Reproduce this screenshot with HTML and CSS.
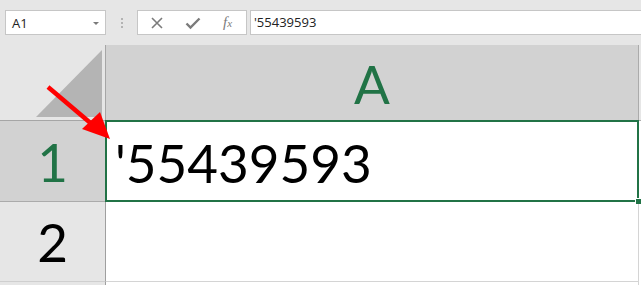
FILE: index.html
```html
<!DOCTYPE html>
<html>
<head>
	<meta charset="utf-8">
	<title>Excel apostrophe</title>
	<link rel="stylesheet" href="styles.css">
</head>
<body>

	<div class="topbar">
		<div class="namebox">
			<span>A1</span>
			<span class="caret"></span>
		</div>
		<div class="grip"><i></i><i></i><i></i></div>
		<div class="fxbtns">
			<svg class="ico" width="14" height="14" viewBox="0 0 14 14">
				<path d="M2 2 L12 12 M12 2 L2 12" stroke="#7b7b7b" stroke-width="1.6" fill="none"/>
			</svg>
			<svg class="ico" width="16" height="14" viewBox="0 0 16 14">
				<path d="M1.5 7.5 L5.5 11.5 L14.5 2.5" stroke="#7b7b7b" stroke-width="2.4" fill="none"/>
			</svg>
			<span class="fx">f<small>x</small></span>
		</div>
		<div class="formula">'55439593</div>
	</div>

	<div class="sheet">
		<div class="corner">
			<svg width="105" height="75" viewBox="0 0 105 75">
				<polygon points="102,5 102,72 36,72" fill="#b4b4b4"/>
			</svg>
		</div>
		<div class="colhead">A</div>
		<div class="rest head"></div>

		<div class="rowhead sel">1</div>
		<div class="cell active">'55439593</div>
		<div class="rest"></div>

		<div class="rowhead">2</div>
		<div class="cell"></div>
		<div class="rest"></div>

		<div class="rowhead last"></div>
		<div class="cell last"></div>
		<div class="rest"></div>
	</div>

	<!-- red pointer drawn over the grid -->
	<svg class="arrow" width="641" height="285" viewBox="0 0 641 285">
		<line x1="48" y1="87" x2="94" y2="126" stroke="#ff0000" stroke-width="4.5"/>
		<polygon points="110,139 82,129 100,112" fill="#ff0000"/>
	</svg>

</body>
</html>
```

FILE: styles.css
```css
body{
	margin: 0;
	width: 641px;
	height: 285px;
	overflow: hidden;
	background: #e6e6e6;
	position: relative;
	font-family: "Open Sans", "Noto Sans", sans-serif;
}

/* formula bar */
.topbar{
	display: flex;
	height: 45px;
	box-sizing: border-box;
	padding: 10px 0 10px 5px;
}
.namebox{
	width: 101px;
	height: 25px;
	box-sizing: border-box;
	background: #fff;
	border: 1px solid #c6c6c6;
	display: flex;
	align-items: center;
	justify-content: space-between;
	padding: 0 6px 0 6px;
	font-size: 13px;
	color: #222;
}
.caret{
	width: 0;
	height: 0;
	border-left: 3px solid transparent;
	border-right: 3px solid transparent;
	border-top: 3px solid #7a7a7a;
	margin-top: 1px;
}
.grip{
	width: 31px;
	display: flex;
	flex-direction: column;
	align-items: center;
	justify-content: center;
	gap: 2px;
}
.grip i{
	width: 2px;
	height: 2px;
	background: #b3b3b3;
}
.fxbtns{
	width: 110px;
	height: 25px;
	box-sizing: border-box;
	background: #fff;
	border: 1px solid #c6c6c6;
	display: flex;
	align-items: center;
	padding-left: 12px;
	gap: 21px;
}
.ico{
	display: block;
}
.fx{
	font-family: "Liberation Serif", serif;
	font-style: italic;
	font-size: 15px;
	color: #7b7b7b;
	margin-left: 1px;
}
.fx small{
	font-size: 11px;
}
.formula{
	flex: 1;
	margin-left: 3px;
	height: 25px;
	box-sizing: border-box;
	background: #fff;
	border: 1px solid #c6c6c6;
	border-right: none;
	padding-left: 3px;
	font-size: 13px;
	line-height: 23px;
	color: #222;
}

/* grid */
.sheet{
	display: grid;
	grid-template-columns: 106px 533px 1fr;
	grid-template-rows: 76px 81px 80px 1fr;
	height: 240px;
	font-family: Lato, "Liberation Sans", sans-serif;
}
.corner{
	background: #e6e6e6;
	border-right: 1px solid #a6a6a6;
	border-bottom: 1px solid #a6a6a6;
}
.corner svg{
	display: block;
}
.colhead{
	background: #d2d2d2;
	border-right: 1px solid #ababab;
	border-bottom: 1px solid #ababab;
	color: #217346;
	font-size: 53px;
	display: flex;
	align-items: center;
	justify-content: center;
	padding-top: 2px;
}
.rest{
	background: #fff;
}
.rest.head{
	background: #e6e6e6;
	border-bottom: 1px solid #ababab;
}
.rowhead{
	background: #e6e6e6;
	border-right: 1px solid #9f9f9f;
	border-bottom: 1px solid #cfcfcf;
	font-size: 53px;
	display: flex;
	align-items: center;
	justify-content: center;
	color: #000;
}
.rowhead.sel{
	background: #d2d2d2;
	color: #217346;
	border-bottom-color: #ababab;
}
.rowhead.last{
	border-bottom: none;
}
.cell{
	background: #fff;
	border-right: 1px solid #d4d4d4;
	border-bottom: 1px solid #d4d4d4;
	font-size: 53px;
	display: flex;
	align-items: center;
	padding-left: 9px;
}
.cell.last{
	border-bottom: none;
}
.cell.active{
	position: relative;
	color: #000;
	padding-top: 2px;
}
.cell.active::after{
	content: "";
	position: absolute;
	left: -1px;
	top: -1px;
	right: -1px;
	bottom: -1px;
	border: 2px solid #217346;
}
.cell.active::before{
	content: "";
	position: absolute;
	right: -3px;
	bottom: -3px;
	width: 5px;
	height: 5px;
	background: #217346;
	border-left: 1px solid #fff;
	border-top: 1px solid #fff;
	z-index: 1;
}

.arrow{
	position: absolute;
	left: 0;
	top: 0;
}
```
